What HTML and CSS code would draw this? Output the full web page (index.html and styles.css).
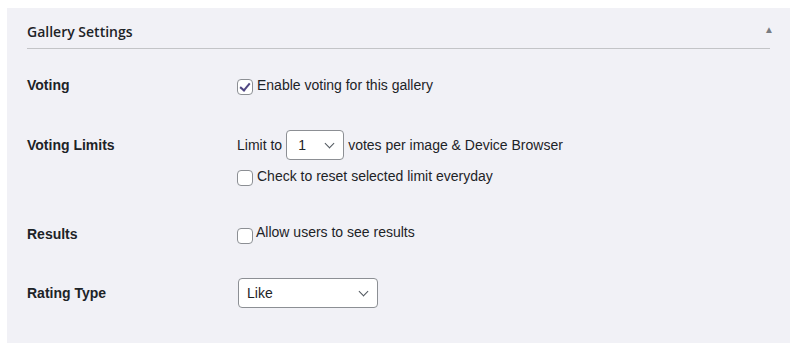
FILE: index.html
```html
<!DOCTYPE html>
<html lang="en">
<head>
    <meta charset="UTF-8">
    <meta name="viewport" content="width=device-width, initial-scale=1.0">
    <title>Gallery Settings</title>
    <link rel="stylesheet" href="styles.css">
</head>
<body>
    <div class="panel">
        <div class="panel-header">
            <h2>Gallery Settings</h2>
            <span class="toggle">&#9650;</span>
        </div>

        <div class="settings">
            <div class="row row-voting">
                <div class="label">Voting</div>
                <div class="field">
                    <label class="check"><input type="checkbox" checked> Enable voting for this gallery</label>
                </div>
            </div>

            <div class="row row-limits">
                <div class="label label-tall">Voting Limits</div>
                <div class="field">
                    <div class="inline">
                        Limit to
                        <span class="select-wrap select-small">
                            <select>
                                <option>1</option>
                                <option>2</option>
                                <option>3</option>
                            </select>
                        </span>
                        votes per image &amp; Device Browser
                    </div>
                    <label class="check check-reset"><input type="checkbox"> Check to reset selected limit everyday</label>
                </div>
            </div>

            <div class="row row-results">
                <div class="label">Results</div>
                <div class="field">
                    <label class="check check-tight"><input type="checkbox">Allow users to see results</label>
                </div>
            </div>

            <div class="row row-rating">
                <div class="label label-tall">Rating Type</div>
                <div class="field">
                    <span class="select-wrap select-wide">
                        <select>
                            <option>Like</option>
                            <option>Stars</option>
                        </select>
                    </span>
                </div>
            </div>
        </div>
    </div>
</body>
</html>
```

FILE: styles.css
```css
body {
    margin: 0;
    background: #ffffff;
    font-family: "Liberation Sans", Arial, sans-serif;
    font-size: 14px;
    color: #1d2327;
}
.panel {
    margin: 8px 10px 0 7px;
    height: 335px;
    background: #f1f1f6;
    padding: 0 20px;
    box-sizing: border-box;
}
.panel-header {
    display: flex;
    align-items: center;
    justify-content: space-between;
    height: 40px;
    border-bottom: 1px solid #c3c4c7;
}
.panel-header h2 {
    margin: 6px 0 0 0;
    font-family: "Open Sans", sans-serif;
    font-size: 14px;
    font-weight: 600;
    color: #1d2327;
}
.toggle {
    font-size: 10px;
    color: #787c82;
    margin: 3px -4px 0 0;
}
.row {
    display: flex;
    align-items: flex-start;
}
.row-voting {
    padding-top: 28px;
}
.row-limits {
    padding-top: 35px;
}
.row-results {
    padding-top: 40px;
}
.row-rating {
    padding-top: 34px;
}
.label {
    width: 210px;
    flex-shrink: 0;
    font-weight: bold;
    line-height: 16px;
}
.label-tall {
    line-height: 30px;
}
.field {
    display: flex;
    flex-direction: column;
}
.inline {
    display: flex;
    align-items: center;
    gap: 4px;
    height: 30px;
}
.check {
    display: flex;
    align-items: flex-start;
    line-height: 16px;
}
.check-reset {
    margin-top: 8px;
}
.check input {
    appearance: none;
    -webkit-appearance: none;
    width: 16px;
    height: 16px;
    margin: 2px 4px 0 0;
    border: 1px solid #8c8f94;
    border-radius: 4px;
    background: #ffffff;
    position: relative;
    flex-shrink: 0;
    box-sizing: border-box;
}
.check-tight input {
    margin-right: 3px;
}
.check input:checked::before {
    content: "";
    position: absolute;
    left: 4px;
    top: 1px;
    width: 4px;
    height: 8px;
    border-right: 2px solid #4f4682;
    border-bottom: 2px solid #4f4682;
    transform: rotate(40deg);
}
.row-results .check {
    line-height: 12px;
}
.select-wrap {
    position: relative;
    display: inline-block;
}
.select-wrap select {
    appearance: none;
    -webkit-appearance: none;
    height: 30px;
    border: 1px solid #8c8f94;
    border-radius: 4px;
    background: #ffffff;
    font-family: "Liberation Sans", Arial, sans-serif;
    font-size: 14px;
    color: #1d2327;
    padding: 0 24px 0 8px;
    box-sizing: border-box;
}
.select-small select {
    width: 58px;
    padding-left: 11px;
}
.select-wide select {
    width: 140px;
    margin-left: 1px;
}
.select-wrap::after {
    content: "";
    position: absolute;
    right: 11px;
    top: 10px;
    width: 6px;
    height: 6px;
    border-right: 1.5px solid #50575e;
    border-bottom: 1.5px solid #50575e;
    transform: rotate(45deg);
    pointer-events: none;
}
```
